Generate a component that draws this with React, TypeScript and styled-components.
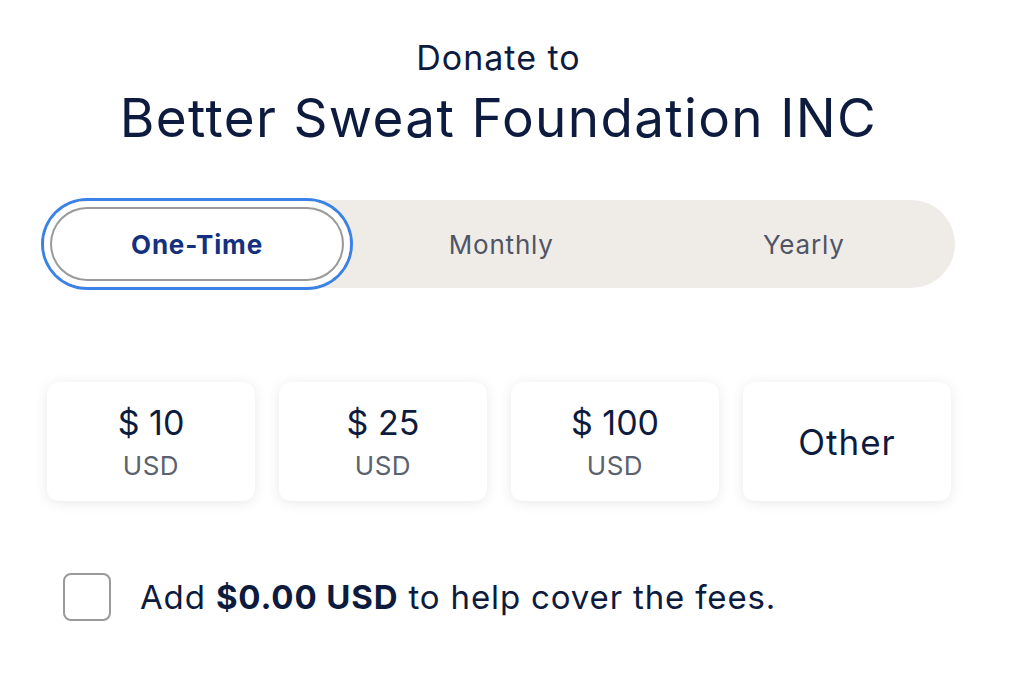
import styled, { createGlobalStyle } from 'styled-components';
import type { FC } from 'react';

const GlobalStyle = createGlobalStyle`
    html, body {
        margin: 0;
        padding: 0;
        background: #fff;
    }
    body {
        font-family: Inter, "Noto Sans", "Liberation Sans", sans-serif;
        color: #0d1b3e;
    }
`;

const Page = styled.div`
    width: 913px;
    padding: 37px 0 0 42px;
    display: flex;
    flex-direction: column;
`;

const Header = styled.div`
    display: flex;
    flex-direction: column;
    align-items: center;
`;

const Kicker = styled.div`
    font-size: 34px;
    line-height: 42px;
    color: #0d1b3e;
    letter-spacing: 1px;
`;

const Title = styled.h1`
    margin: 8px 0 0;
    font-size: 53px;
    line-height: 62px;
    font-weight: 400;
    color: #0d1b3e;
    letter-spacing: 1.35px;
`;

const Tabs = styled.div`
    margin-top: 51px;
    display: grid;
    grid-template-columns: repeat(3, 1fr);
    align-items: center;
    height: 88px;
    border-radius: 44px;
    background: #efece8;
`;

const Tab = styled.button<{ $active?: boolean }>`
    border: none;
    margin: 0;
    padding: 0;
    font-family: inherit;
    font-size: 26px;
    letter-spacing: 0.8px;
    cursor: pointer;
    height: ${p => (p.$active ? '86px' : '88px')};
    width: ${p => (p.$active ? '306px' : 'auto')};
    margin-left: ${p => (p.$active ? '2px' : '0')};
    border-radius: 44px;
    background: ${p => (p.$active ? '#fff' : 'transparent')};
    color: ${p => (p.$active ? '#14307e' : '#4f5564')};
    font-weight: ${p => (p.$active ? 700 : 400)};
    box-shadow: ${p =>
        p.$active
            ? 'inset 0 0 0 6px #fff, inset 0 0 0 8px #9a9a9a, 0 0 0 3px #3b82e8'
            : 'none'};
`;

const Amounts = styled.div`
    margin-top: 94px;
    display: grid;
    grid-template-columns: repeat(4, 208px);
    gap: 24px;
    padding-left: 5px;
`;

const AmountCard = styled.button`
    height: 119px;
    border: none;
    border-radius: 12px;
    background: #fff;
    box-shadow: 0 2px 14px rgba(0, 0, 0, 0.09);
    display: flex;
    flex-direction: column;
    align-items: center;
    justify-content: center;
    gap: 8px;
    padding: 0;
    font-family: inherit;
    cursor: pointer;
`;

const Amount = styled.span<{ $large?: boolean }>`
    font-size: ${p => (p.$large ? '35px' : '34px')};
    letter-spacing: ${p => (p.$large ? '1px' : '0')};
    line-height: 40px;
    color: #0d1b3e;
`;

const Currency = styled.span`
    font-size: 26px;
    line-height: 30px;
    letter-spacing: 0.5px;
    color: #5a6170;
`;

const FeeRow = styled.label`
    margin-top: 72px;
    padding-left: 21px;
    display: flex;
    align-items: center;
    gap: 29px;
    font-size: 33px;
    line-height: 44px;
    color: #0d1b3e;
    letter-spacing: 0.85px;
`;

const Checkbox = styled.span`
    width: 44px;
    height: 44px;
    border: 2px solid #9a9a9a;
    border-radius: 8px;
    flex-shrink: 0;
`;

const Strong = styled.strong`
    font-weight: 700;
`;

const amounts = ['10', '25', '100'];

const App: FC = () => {
    return (
        <>
            <GlobalStyle />
            <Page>
                <Header>
                    <Kicker>Donate to</Kicker>
                    <Title>Better Sweat Foundation INC</Title>
                </Header>

                <Tabs>
                    <Tab $active>One-Time</Tab>
                    <Tab>Monthly</Tab>
                    <Tab>Yearly</Tab>
                </Tabs>

                <Amounts>
                    {amounts.map(a => (
                        <AmountCard key={a}>
                            <Amount>$ {a}</Amount>
                            <Currency>USD</Currency>
                        </AmountCard>
                    ))}
                    <AmountCard>
                        <Amount $large>Other</Amount>
                    </AmountCard>
                </Amounts>

                <FeeRow>
                    <Checkbox />
                    <span>
                        Add <Strong>$0.00 USD</Strong> to help cover the fees.
                    </span>
                </FeeRow>
            </Page>
        </>
    );
};

export default App;
